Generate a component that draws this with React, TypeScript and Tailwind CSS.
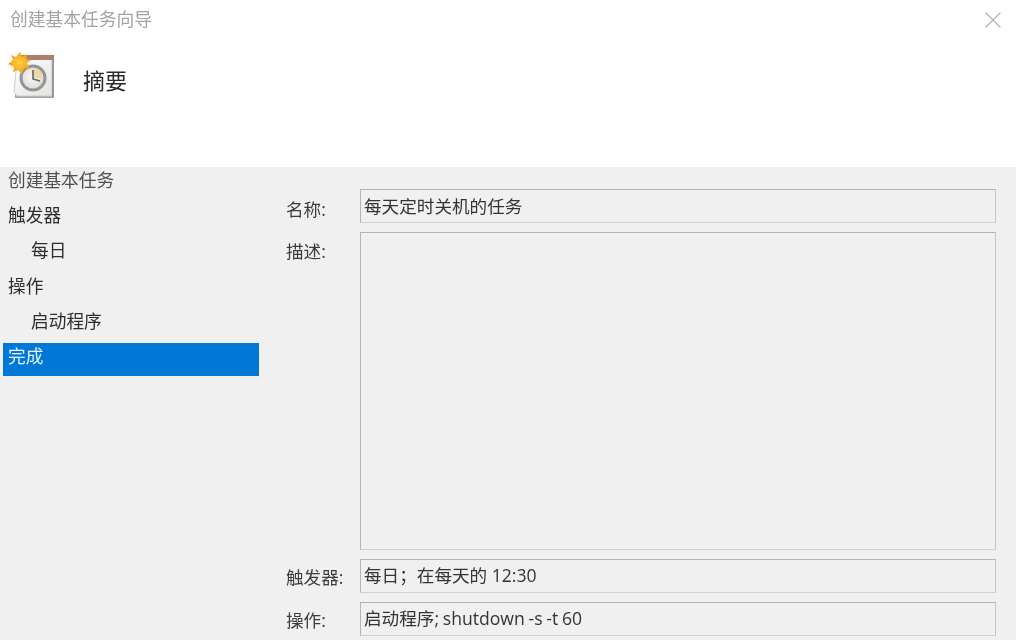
import React from "react";

const font = { fontFamily: '"Open Sans", "Noto Sans CJK SC", sans-serif' };

function WizardIcon() {
  return (
    <svg width="48" height="50" viewBox="0 0 48 50" className="block">
      <defs>
        <linearGradient id="page" x1="0" y1="0" x2="1" y2="1">
          <stop offset="0" stopColor="#ffffff" />
          <stop offset="1" stopColor="#e4e2de" />
        </linearGradient>
        <radialGradient id="face" cx="0.45" cy="0.45" r="0.6">
          <stop offset="0" stopColor="#fbf9f2" />
          <stop offset="1" stopColor="#dcdad2" />
        </radialGradient>
        <radialGradient id="sun" cx="0.5" cy="0.5" r="0.55">
          <stop offset="0" stopColor="#ffd040" />
          <stop offset="1" stopColor="#f39a12" />
        </radialGradient>
      </defs>
      <path d="M7 42 L7 46 L45 46 L45 42 Z" fill="#a5a3a0" />
      <path d="M6 40 L9 44 L44 44 L44 7 L9 7 Z" fill="url(#page)" stroke="#cfcdc9" strokeWidth="1" />
      <rect x="10" y="3" width="36" height="5" fill="#a97f70" />
      <rect x="44" y="7" width="2" height="39" fill="#9a9895" />
      <circle cx="25" cy="26" r="13.5" fill="#8f969b" />
      <circle cx="25" cy="26" r="10.5" fill="url(#face)" />
      <path d="M25 16 A10 10 0 0 1 35 26 L25 26 Z" fill="#f0d49a" opacity="0.85" />
      <path d="M25 18 L25 27 L32 29" fill="none" stroke="#5a6770" strokeWidth="1.6" />
      <path
        d="M12 0 L14 5 L19 2 L18 7 L23 8 L19 11 L22 17 L16 16 L14 22 L10 18 L5 20 L6 15 L0 12 L5 8 L3 3 L8 5 Z"
        fill="url(#sun)"
      />
    </svg>
  );
}

function Field({
  label,
  value,
  mt,
  labelPt,
  valuePt,
  valueClass = "",
}: {
  label: string;
  value: string;
  mt: string;
  labelPt: string;
  valuePt: string;
  valueClass?: string;
}) {
  return (
    <div className={`flex h-[34px] ${mt}`}>
      <div className={`w-[73px] shrink-0 -ml-px text-[17.6px] leading-[24px] text-[#3c3c3c] ${labelPt}`}>{label}</div>
      <div
        className={`ml-px w-[636px] shrink-0 border border-[#b4b4b4] border-b-[#d0d0d0] border-r-[#c4c4c4] bg-[#f0f0f0] pl-[3px] text-[17.6px] leading-[25px] text-[#343434] whitespace-nowrap ${valuePt} ${valueClass}`}
      >
        {value}
      </div>
    </div>
  );
}

const steps = [
  { text: "创建基本任务", indent: false, color: "text-[#505050]" },
  { text: "触发器", indent: false, color: "text-[#2e2e2e]" },
  { text: "每日", indent: true, color: "text-[#2e2e2e]" },
  { text: "操作", indent: false, color: "text-[#2e2e2e]" },
  { text: "启动程序", indent: true, color: "text-[#2e2e2e]" },
];

export default function App() {
  return (
    <div className="flex h-[640px] w-[1016px] flex-col overflow-hidden bg-white blur-[0.4px]" style={font}>
      <header className="h-[167px] shrink-0 bg-white">
        <div className="flex h-[40px] items-start justify-between pl-[10px] pr-[14px] pt-[6px]">
          <span className="text-[17.75px] leading-[26px] text-[#a3a3a3]">创建基本任务向导</span>
          <svg width="18" height="18" viewBox="0 0 18 18" className="mt-[5px]">
            <path d="M1.5 1.5 L16.5 16.5 M16.5 1.5 L1.5 16.5" stroke="#b4b4b4" strokeWidth="1.3" fill="none" />
          </svg>
        </div>
        <div className="flex items-start pl-[8px] pt-[12px]">
          <WizardIcon />
          <span className="ml-[27px] mt-[12px] text-[22px] leading-[32px] text-[#2a2a2a]">摘要</span>
        </div>
      </header>
      <main className="flex min-h-0 flex-1 bg-[#f0f0f0]">
        <nav className="w-[287px] shrink-0 pl-[3px]">
          {steps.map((s) => (
            <div
              key={s.text}
              className={`h-[35.2px] w-[256px] text-[17.7px] leading-[26px] ${s.color} ${s.indent ? "pl-[28px]" : "pl-[5px]"}`}
            >
              {s.text}
            </div>
          ))}
          <div className="h-[33px] w-[256px] bg-[#0078d7] pl-[5px] text-[17.7px] leading-[26px] text-[#e8f3fb]">
            完成
          </div>
        </nav>
        <section className="pt-[22px]">
          <Field label="名称:" value="每天定时关机的任务" mt="" labelPt="pt-[8px]" valuePt="pt-[4px]" />
          <div className="mt-[9px] flex h-[318px]">
            <div className="-ml-px w-[73px] shrink-0 pt-[7px] text-[17.6px] leading-[24px] text-[#3c3c3c]">描述:</div>
            <div className="ml-px w-[636px] shrink-0 border border-[#b4b4b4] border-b-[#d0d0d0] border-r-[#c4c4c4] bg-[#f0f0f0]" />
          </div>
          <Field label="触发器:" value="每日；在每天的 12:30" mt="mt-[9px]" labelPt="pt-[6px]" valuePt="pt-[3px]" />
          <Field
            label="操作:"
            value="启动程序; shutdown -s -t 60"
            mt="mt-[9px]"
            labelPt="pt-[6px]"
            valuePt="pt-[3px]"
            valueClass="[word-spacing:-0.8px]"
          />
        </section>
      </main>
    </div>
  );
}
